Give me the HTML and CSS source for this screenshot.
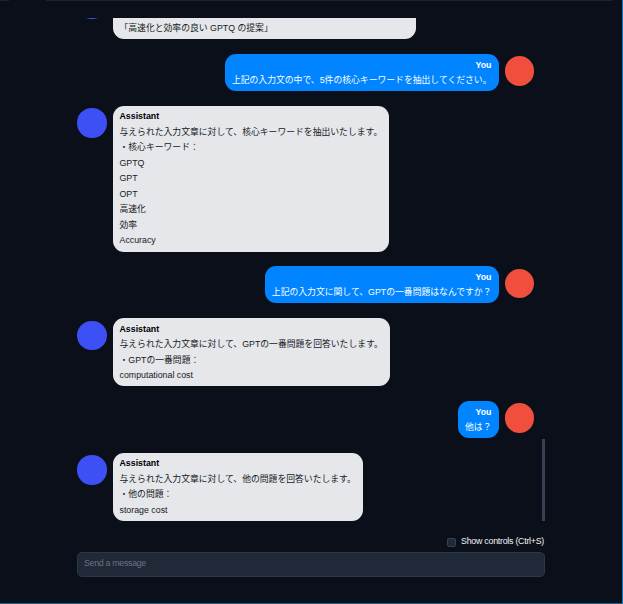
FILE: index.html
```
<!DOCTYPE html>
<html lang="ja">

<head>
    <meta charset="UTF-8">
    <meta name="viewport" content="width=device-width, initial-scale=1.0">
    <title>Chat</title>
    <link rel="stylesheet" href="styles.css">
</head>

<body>
    <div class="page">
        <div class="topbar">
            <span class="tab-edge"></span>
            <span class="tab-line"></span>
        </div>

        <div class="chat">
            <div class="messages">
                <div class="message">
                    <div class="avatar"></div>
                    <div class="bubble first">
                        <p>「高速化と効率の良い GPTQ の提案」</p>
                    </div>
                </div>

                <div class="message user">
                    <div class="bubble">
                        <p class="name">You</p>
                        <p>上記の入力文の中で、5件の核心キーワードを抽出してください。</p>
                    </div>
                    <div class="avatar"></div>
                </div>

                <div class="message">
                    <div class="avatar"></div>
                    <div class="bubble">
                        <p class="name">Assistant</p>
                        <p>与えられた入力文章に対して、核心キーワードを抽出いたします。</p>
                        <p>・核心キーワード：</p>
                        <p>GPTQ</p>
                        <p>GPT</p>
                        <p>OPT</p>
                        <p>高速化</p>
                        <p>効率</p>
                        <p>Accuracy</p>
                    </div>
                </div>

                <div class="message user">
                    <div class="bubble">
                        <p class="name">You</p>
                        <p>上記の入力文に関して、GPTの一番問題はなんですか？</p>
                    </div>
                    <div class="avatar"></div>
                </div>

                <div class="message">
                    <div class="avatar"></div>
                    <div class="bubble">
                        <p class="name">Assistant</p>
                        <p>与えられた入力文章に対して、GPTの一番問題を回答いたします。</p>
                        <p>・GPTの一番問題：</p>
                        <p>computational cost</p>
                    </div>
                </div>

                <div class="message user">
                    <div class="bubble">
                        <p class="name">You</p>
                        <p>他は？</p>
                    </div>
                    <div class="avatar"></div>
                </div>

                <div class="message">
                    <div class="avatar"></div>
                    <div class="bubble">
                        <p class="name">Assistant</p>
                        <p>与えられた入力文章に対して、他の問題を回答いたします。</p>
                        <p>・他の問題：</p>
                        <p>storage cost</p>
                    </div>
                </div>
            </div>
            <div class="scrollbar"></div>
        </div>

        <label class="controls">
            <input type="checkbox" class="check">
            <span>Show controls (Ctrl+S)</span>
        </label>

        <input class="send" type="text" placeholder="Send a message">
    </div>
</body>

</html>
```
FILE: styles.css
```
* {
    box-sizing: border-box;
}

body {
    margin: 0;
    background-color: #0b0f19;
    font-family: "Liberation Sans", "Noto Sans CJK JP", Arial, sans-serif;
    font-size: 8.82px;
    line-height: 15.5px;
}

p {
    margin: 0;
}

.page {
    display: flex;
    flex-direction: column;
    width: 623px;
    height: 604px;
    padding: 0 77px;
    border-right: 1px solid #0f76bd;
    border-bottom: 1px solid #1d5c8c;
    overflow: hidden;
}

/* Top edge of the panel */
.topbar {
    display: flex;
    flex: none;
    gap: 37px;
    height: 18px;
    margin: 0 -68px 0 -77px;
}

.tab-edge {
    width: 9px;
    height: 1px;
    background-color: #1c222d;
}

.tab-line {
    flex: 1;
    height: 1px;
    background-color: #1c222d;
}

.chat {
    display: flex;
    flex: none;
    width: 468px;
    height: 503px;
    overflow: hidden;
}

/* Scrolled to the last message */
.messages {
    display: flex;
    flex: 1;
    flex-direction: column;
    justify-content: flex-end;
    gap: 14.9px;
    padding-right: 8px;
}

.scrollbar {
    align-self: flex-end;
    width: 3px;
    height: 82px;
    background-color: #374151;
}

.message {
    display: flex;
    flex: none;
    align-items: flex-start;
    gap: 6px;
}

.user {
    justify-content: flex-end;
    text-align: right;
}

.avatar {
    flex: none;
    width: 29.5px;
    height: 29.5px;
    margin-top: 2.3px;
    border-radius: 50%;
    background-color: #3c50f5;
}

.user .avatar {
    background-color: #f04f3e;
}

.bubble {
    padding: 3.4px 7px 2.6px;
    border-radius: 11px;
    background-color: #e5e7eb;
    color: #151a23;
    white-space: nowrap;
}

.user .bubble {
    background-color: #0084ff;
    color: #fff;
}

.first {
    display: flex;
    align-items: flex-end;
    width: 303px;
    height: 52px;
}

.name {
    font-weight: bold;
    color: #000;
}

.user .name {
    color: #fff;
}

.controls {
    display: flex;
    flex: none;
    align-items: center;
    align-self: flex-end;
    gap: 5px;
    height: 16px;
    margin-top: 13px;
    margin-right: 1px;
    color: #f3f4f6;
    letter-spacing: -0.25px;
    white-space: nowrap;
}

.check {
    appearance: none;
    width: 9px;
    height: 9px;
    margin: 0;
    border: 1px solid #374151;
    border-radius: 2px;
    background-color: #1f2937;
}

.send {
    flex: none;
    width: 468px;
    height: 25px;
    margin-top: 2px;
    padding: 0 6px 3px;
    border: 1px solid #2d3847;
    border-radius: 5px;
    outline: none;
    background-color: #1f2937;
    color: #fff;
    font: inherit;
    letter-spacing: -0.3px;
}

.send::placeholder {
    color: #6b7280;
}
```
